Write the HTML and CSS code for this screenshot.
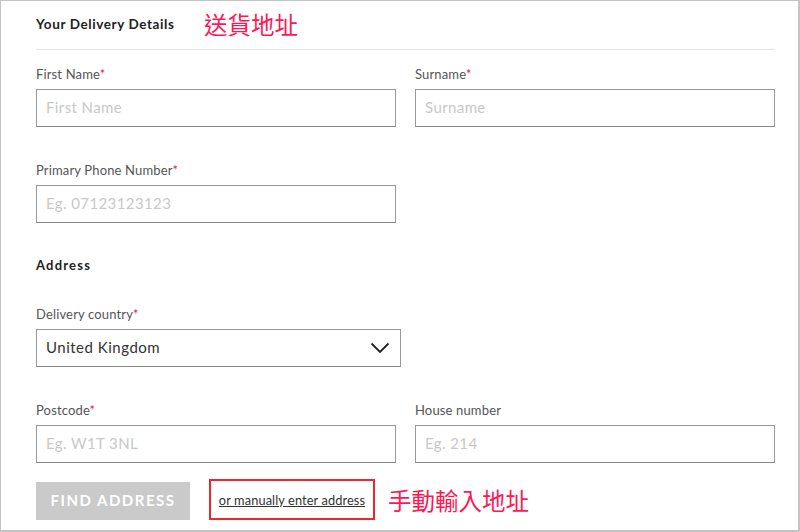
FILE: index.html
```html
<!DOCTYPE html>
<html>
<head>
<meta charset="utf-8">
<link rel="stylesheet" href="styles.css">
</head>
<body>
<div class="frame">
  <div class="head">
    <h2 class="title">Your Delivery Details</h2>
    <span class="note note-top">送貨地址</span>
  </div>
  <div class="divider"></div>

  <div class="row two">
    <div class="field">
      <label class="label">First Name<span class="req">*</span></label>
      <div class="input"><span class="ph">First Name</span></div>
    </div>
    <div class="field">
      <label class="label">Surname<span class="req">*</span></label>
      <div class="input"><span class="ph">Surname</span></div>
    </div>
  </div>

  <div class="row two">
    <div class="field">
      <label class="label">Primary Phone Number<span class="req">*</span></label>
      <div class="input"><span class="ph">Eg. 07123123123</span></div>
    </div>
  </div>

  <h3 class="section">Address</h3>

  <div class="row country">
    <div class="field">
      <label class="label">Delivery country<span class="req">*</span></label>
      <div class="input select">
        <span class="val">United Kingdom</span>
        <svg class="chev" width="20" height="12" viewBox="0 0 20 12"><path d="M1.5 1.5 L10 10 L18.5 1.5" fill="none" stroke="#222" stroke-width="1.8"/></svg>
      </div>
    </div>
  </div>

  <div class="row two">
    <div class="field">
      <label class="label">Postcode<span class="req">*</span></label>
      <div class="input"><span class="ph">Eg. W1T 3NL</span></div>
    </div>
    <div class="field">
      <label class="label">House number</label>
      <div class="input"><span class="ph">Eg. 214</span></div>
    </div>
  </div>

  <div class="actions">
    <button class="btn">FIND ADDRESS</button>
    <div class="linkbox"><a class="link" href="#">or manually enter address</a></div>
    <span class="note note-bottom">手動輸入地址</span>
  </div>
</div>
</body>
</html>
```

FILE: styles.css
```css
* { box-sizing: border-box; }
html, body { margin: 0; padding: 0; background: #fff; }
body { font-family: Lato, "Noto Sans", sans-serif; color: #444; }

.frame {
  width: 800px;
  height: 532px;
  border: 1px solid #c4c4c4;
  border-right-width: 2px;
  border-bottom-width: 2px;
  padding: 0 0 0 35px;
  overflow: hidden;
}

.head {
  height: 48px;
  display: flex;
  align-items: center;
  padding-bottom: 2px;
}
.title {
  margin: 0;
  font-size: 13.5px;
  font-weight: 700;
  color: #222;
  letter-spacing: 0.6px;
  width: 168px;
}
.note {
  color: #ff1652;
  font-family: "Noto Sans CJK TC", "Noto Sans CJK SC", sans-serif;
  font-size: 23.5px;
  line-height: 28px;
}
.divider {
  width: 739px;
  height: 1px;
  background: #e3e3e3;
}

.row {
  display: grid;
  grid-template-columns: 360px 360px;
  column-gap: 19px;
}
.row.country { grid-template-columns: 365px; margin-top: 33px; }
.divider + .row { margin-top: 16px; }
.row.two + .row.two { margin-top: 35px; }
.section + .row { margin-top: 33px; }
.country + .row { margin-top: 35px; }

.field { display: flex; flex-direction: column; }
.label {
  font-size: 13px;
  line-height: 16px;
  color: #555;
  margin-bottom: 7px;
  letter-spacing: 0.15px;
}
.req { color: #e0244a; }

.input {
  height: 38px;
  border: 1px solid #999;
  border-bottom-color: #888;
  display: flex;
  align-items: center;
  padding: 0 10px 3px 9px;
}
.ph {
  color: #c8c8c8;
  font-size: 15px;
  letter-spacing: 0.4px;
}
.select { justify-content: space-between; padding-right: 10px; padding-bottom: 2px; }
.val {
  color: #333;
  font-size: 15px;
  letter-spacing: 0.5px;
}
.chev { display: block; margin-top: 2px; }

.section {
  margin: 34px 0 0 0;
  font-size: 13px;
  line-height: 16px;
  font-weight: 700;
  color: #222;
  letter-spacing: 1.2px;
}

.actions {
  margin-top: 16px;
  display: flex;
  align-items: flex-end;
  height: 41px;
}
.btn {
  width: 154px;
  height: 38px;
  border: 0;
  background: #cacaca;
  color: #fff;
  font-family: Lato, "Noto Sans", sans-serif;
  font-size: 15px;
  font-weight: 700;
  letter-spacing: 1.5px;
  padding: 0 0 2px 0;
}
.linkbox {
  margin-left: 19px;
  width: 166px;
  height: 41px;
  border: 2px solid #f0262e;
  display: flex;
  align-items: center;
  justify-content: center;
  padding-top: 1px;
}
.link {
  color: #333;
  font-size: 12.8px;
  letter-spacing: 0.1px;
}
.note-bottom { margin-left: 13px; align-self: center; margin-top: 1px; }
```
